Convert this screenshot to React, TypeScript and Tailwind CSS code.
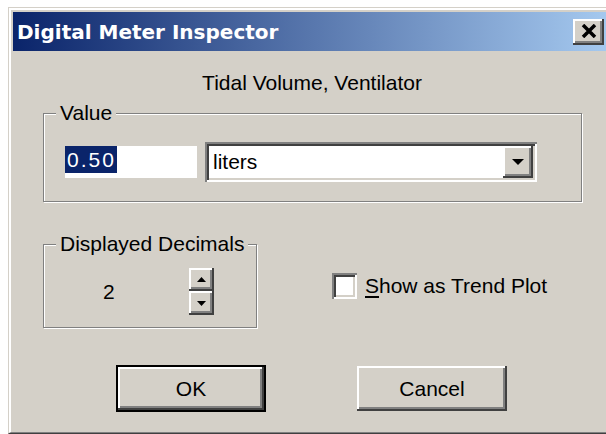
import React from "react";

const raised =
  "bg-[#d4d0c8] shadow-[inset_-2px_-2px_0_#404040,inset_2px_2px_0_#ffffff,inset_-4px_-4px_0_#808080]";
const sunken =
  "shadow-[inset_2px_2px_0_#808080,inset_-2px_-2px_0_#ffffff,inset_4px_4px_0_#404040,inset_-4px_-4px_0_#d4d0c8]";
const etched =
  "border border-[#808080] shadow-[inset_1px_1px_0_#ffffff,1px_1px_0_#ffffff]";

function DownArrow({ w = 12, h = 6 }: { w?: number; h?: number }) {
  return (
    <svg width={w} height={h} viewBox={`0 0 ${w} ${h}`}>
      <polygon points={`0,0 ${w},0 ${w / 2},${h}`} fill="#000" />
    </svg>
  );
}

function UpArrow({ w = 8, h = 4 }: { w?: number; h?: number }) {
  return (
    <svg width={w} height={h} viewBox={`0 0 ${w} ${h}`}>
      <polygon points={`0,${h} ${w},${h} ${w / 2},0`} fill="#000" />
    </svg>
  );
}

export default function App() {
  return (
    <div className="w-[606px] h-[434px] overflow-hidden bg-white font-['Liberation_Sans',Arial,sans-serif] text-[21px] leading-[24px] text-black">
      {/* window frame */}
      <div className="ml-[8px] mt-[7px] w-[620px] border-l border-t border-b border-l-[#d4d0c8] border-t-[#d4d0c8] border-b-[#404040]">
        <div className="border-l-2 border-t-2 border-b border-l-white border-t-white border-b-[#808080]">
          <div className="w-[602px] h-[422px] bg-[#d4d0c8] px-[2px] pt-[2px]">
            {/* caption */}
            <div className="h-[39px] flex items-center justify-between bg-[linear-gradient(to_right,#0a246a,#a6caf0)]">
              <span className="pl-[4px] font-['DejaVu_Sans',sans-serif] font-bold text-[20px] text-white">
                Digital Meter Inspector
              </span>
              <div className={`mr-[7px] w-[31px] h-[26px] flex items-center justify-center ${raised}`}>
                <svg width="16" height="14" viewBox="0 0 16 14" className="-mt-[1px]">
                  <path d="M2 1 L14 13 M14 1 L2 13" stroke="#000" strokeWidth="3.5" />
                </svg>
              </div>
            </div>

            {/* body */}
            <div className="pt-[20px]">
              <div className="text-center">Tidal Volume, Ventilator</div>

              <fieldset className={`mt-[6px] ml-[30px] mr-[29px] pt-[17px] pb-[19px] ${etched}`}>
                <legend className="ml-[12px] px-[4px] bg-[#d4d0c8] whitespace-nowrap">Value</legend>
                <div className="pl-[21px] flex items-center gap-[8px]">
                  <div className="w-[132px] h-[32px] bg-white">
                    <span className="inline-block h-[27px] w-[52px] bg-[#0a246a] text-white pl-[2px] tracking-[2px] leading-[27px]">
                      0.50
                    </span>
                  </div>
                  <div className={`w-[332px] h-[40px] bg-white p-[4px] flex ${sunken}`}>
                    <div className="flex-1 pl-[4px] flex items-center">liters</div>
                    <div className={`w-[30px] h-[32px] flex items-center justify-center ${raised}`}>
                      <DownArrow w={12} h={6} />
                    </div>
                  </div>
                </div>
              </fieldset>

              <div className="mt-[30px] flex items-start">
                <fieldset className={`ml-[30px] w-[214px] pt-[12px] pb-[12px] ${etched}`}>
                  <legend className="ml-[12px] px-[4px] bg-[#d4d0c8] whitespace-nowrap">Displayed Decimals</legend>
                  <div className="pl-[59px] flex items-center">
                    <span>2</span>
                    <div className="ml-[74px] flex flex-col">
                      <div className={`w-[25px] h-[23px] flex items-center justify-center ${raised}`}>
                        <UpArrow w={9} h={5} />
                      </div>
                      <div className={`w-[25px] h-[24px] flex items-center justify-center ${raised}`}>
                        <DownArrow w={9} h={5} />
                      </div>
                    </div>
                  </div>
                </fieldset>

                <label className="ml-[75px] mt-[41px] flex items-center gap-[8px] whitespace-nowrap">
                  <span className={`w-[25px] h-[26px] bg-white ${sunken}`} />
                  <span>
                    <span className="underline underline-offset-[3px]">S</span>how as Trend Plot
                  </span>
                </label>
              </div>

              <div className="mt-[37px] flex items-center">
                <div className="ml-[103px] w-[150px] h-[47px] border-2 border-black">
                  <div className={`w-full h-full flex items-center justify-center ${raised}`}>OK</div>
                </div>
                <div className={`ml-[91px] w-[150px] h-[45px] flex items-center justify-center ${raised}`}>
                  Cancel
                </div>
              </div>
            </div>
          </div>
        </div>
      </div>
    </div>
  );
}
